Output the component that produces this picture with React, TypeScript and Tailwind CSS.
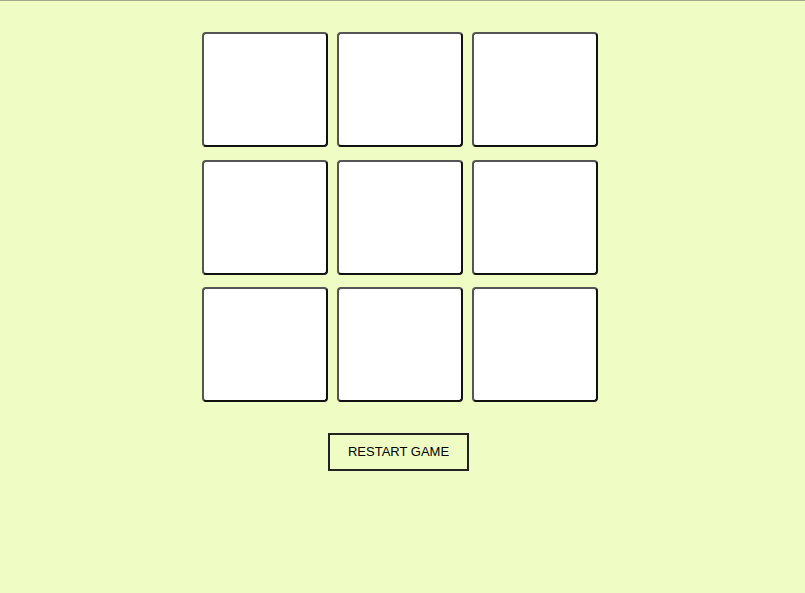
const CELLS = Array.from({ length: 9 }, (_, i) => i);

export default function App() {
  return (
    <div className="min-h-[593px] w-full bg-[#effdc5] border-t border-[#a3a88a] font-['Liberation_Sans',Arial,sans-serif]">
      <div className="flex flex-col items-center pr-[6px] pt-[31px]">
        <div className="grid grid-cols-[repeat(3,126px)] gap-x-[9px] gap-y-[12.5px]">
          {CELLS.map((c) => (
            <button
              key={c}
              className="h-[115px] w-[126px] rounded-[4px] border-2 border-t-[#555] border-l-[#555] border-r-[#111] border-b-[#111] bg-white"
            />
          ))}
        </div>
        <button className="mr-[2px] mt-[31px] h-[38px] w-[141px] border-2 border-[#222] text-[13px] text-black">
          RESTART GAME
        </button>
      </div>
    </div>
  );
}
